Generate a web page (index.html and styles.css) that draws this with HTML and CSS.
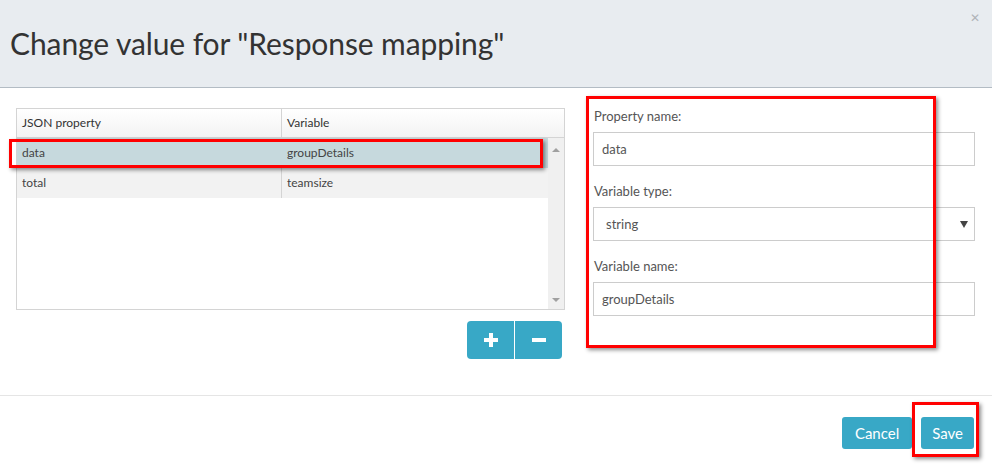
FILE: index.html
```html
<!DOCTYPE html>
<html>
<head>
<meta charset="utf-8">
<link rel="stylesheet" href="styles.css">
</head>
<body>
<div class="modal">
  <div class="modal-header">
    <h1 class="title">Change value for "Response mapping"</h1>
    <span class="close">&#x2715;</span>
  </div>
  <div class="modal-body">
    <div class="left">
      <div class="grid">
        <div class="grid-head">
          <div class="cell c1">JSON property</div>
          <div class="cell c2">Variable</div>
        </div>
        <div class="grid-main">
          <div class="rows">
            <div class="row selected">
              <div class="cell c1">data</div>
              <div class="cell c2">groupDetails</div>
            </div>
            <div class="row">
              <div class="cell c1">total</div>
              <div class="cell c2">teamsize</div>
            </div>
          </div>
          <div class="scrollbar">
            <span class="arrow up"></span>
            <span class="arrow down"></span>
          </div>
        </div>
        <div class="annot annot-row"></div>
      </div>
      <div class="btn-group">
        <button class="btn btn-icon"><svg width="14" height="14" viewBox="0 0 14 14"><rect x="5" y="0" width="4" height="14" fill="#fff"/><rect x="0" y="5" width="14" height="4" fill="#fff"/></svg></button>
        <button class="btn btn-icon"><svg width="14" height="14" viewBox="0 0 14 14"><rect x="0" y="5" width="14" height="4" fill="#fff"/></svg></button>
      </div>
    </div>
    <div class="right">
      <label class="label">Property name:</label>
      <div class="input">data</div>
      <label class="label">Variable type:</label>
      <div class="input select"><span class="sel-text">string</span><span class="caret"></span></div>
      <label class="label">Variable name:</label>
      <div class="input">groupDetails</div>
      <div class="annot annot-form"></div>
    </div>
  </div>
  <div class="modal-footer">
    <button class="btn btn-text">Cancel</button>
    <button class="btn btn-text save">Save<span class="annot annot-save"></span></button>
  </div>
</div>
</body>
</html>
```

FILE: styles.css
```css
* { box-sizing: border-box; }
html, body {
  margin: 0;
  padding: 0;
  background: #fff;
  font-family: Lato, "Open Sans", sans-serif;
  color: #333;
}
.modal {
  width: 992px;
  height: 465px;
  display: flex;
  flex-direction: column;
  overflow: hidden;
}
.modal-header {
  position: relative;
  height: 88px;
  background: #e8ecf0;
  border-bottom: 1px solid #b3bcc4;
  display: flex;
  align-items: center;
  padding: 0 0 2px 10px;
}
.title {
  margin: 0;
  font-size: 30px;
  font-weight: 400;
  color: #333;
  letter-spacing: -0.1px;
}
.close {
  position: absolute;
  right: 12px;
  top: 10px;
  font-size: 12px;
  color: #b0b4b8;
}
.modal-body {
  position: relative;
  display: grid;
  grid-template-columns: 549px 1fr;
  column-gap: 28px;
  padding: 20px 17px 0 16px;
  height: 308px;
  border-bottom: 1px solid #e5e5e5;
}
.left {
  display: flex;
  flex-direction: column;
}
.grid {
  position: relative;
  border: 1px solid #d4d4d4;
  height: 202px;
  display: flex;
  flex-direction: column;
  font-size: 12px;
}
.grid-head {
  display: flex;
  height: 29px;
  background: linear-gradient(#ffffff, #f3f3f3);
  border-bottom: 1px solid #d4d4d4;
}
.grid-head .cell { line-height: 28px; color: #333; }
.cell {
  padding-left: 5px;
}
.c1 { width: 265px; border-right: 1px solid #d4d4d4; }
.c2 { flex: 1; }
.grid-main {
  flex: 1;
  display: flex;
}
.rows { flex: 1; }
.row {
  display: flex;
  height: 30px;
  line-height: 29px;
  background: #f2f2f2;
  color: #444;
}
.row.selected { background: #c6d9dd; height: 30px; }
.row.selected .c1 { border-right-color: #c6d9dd; }
.scrollbar {
  width: 16px;
  background: #f0f0f0;
  position: relative;
}
.arrow {
  position: absolute;
  left: 4px;
  width: 0; height: 0;
  border-left: 4px solid transparent;
  border-right: 4px solid transparent;
}
.arrow.up { top: 10px; border-bottom: 4px solid #a0a0a0; }
.arrow.down { bottom: 7px; border-top: 4px solid #a0a0a0; }
.btn-group {
  display: flex;
  align-self: flex-end;
  margin-top: 11px;
  margin-right: 3px;
}
.btn {
  border: none;
  background: #38a8c6;
  color: #fff;
  font-family: Lato, "Open Sans", sans-serif;
  cursor: pointer;
  padding: 0;
}
.btn-icon {
  width: 47px;
  height: 38px;
  display: flex;
  align-items: center;
  justify-content: center;
}
.btn-icon:first-child { border-radius: 4px 0 0 4px; margin-right: 1px; }
.btn-icon:last-child { border-radius: 0 4px 4px 0; }
.right {
  position: relative;
  display: flex;
  flex-direction: column;
  padding-top: 0;
}
.label {
  font-size: 13px;
  color: #555;
  line-height: 16px;
  margin: 0 0 8px 1px;
}
.input {
  height: 34px;
  border: 1px solid #ccc;
  font-size: 13px;
  color: #555;
  padding: 0 8px;
  line-height: 32px;
  margin-bottom: 17px;
}
.select {
  display: flex;
  justify-content: space-between;
  align-items: center;
  padding: 0 12px;
}
.caret {
  width: 0; height: 0;
  border-left: 4px solid transparent;
  border-right: 4px solid transparent;
  border-top: 7px solid #444;
  margin-right: -6px;
}
.modal-footer {
  display: flex;
  justify-content: flex-end;
  gap: 9px;
  padding: 21px 18px 0 0;
}
.btn-text {
  position: relative;
  height: 32px;
  border-radius: 3px;
  font-size: 15px;
  padding: 0 13px;
}
.save { padding: 0 11px; }
.annot {
  position: absolute;
  border: 3px solid #ff0000;
  box-shadow: 2px 2px 4px rgba(0,0,0,0.45);
  pointer-events: none;
}
.annot-row {
  left: -8px;
  top: 30px;
  width: 534px;
  height: 29px;
}
.annot-form {
  left: -7px;
  top: -12px;
  width: 350px;
  height: 252px;
}
.annot-save {
  left: -9px;
  top: -15px;
  width: 67px;
  height: 55px;
}
```
